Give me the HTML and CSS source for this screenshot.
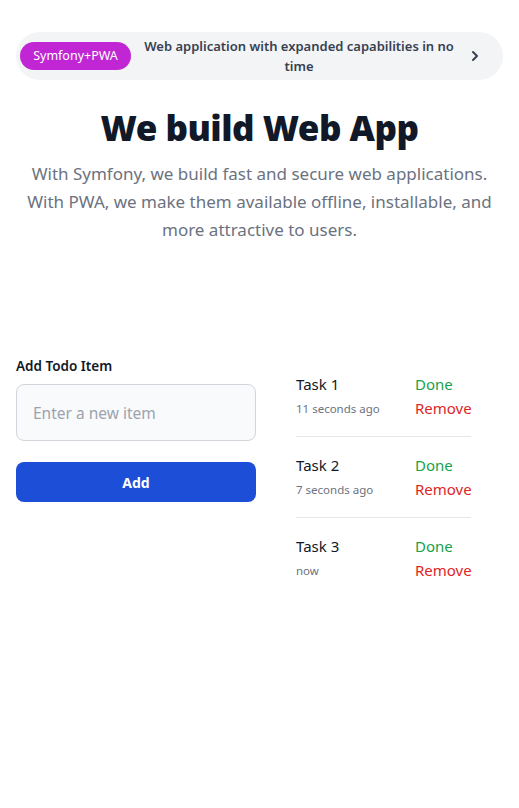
FILE: index.html
```html
<!DOCTYPE html>
<html lang="en">
<head>
<meta charset="utf-8">
<title>We build Web App</title>
<link rel="stylesheet" href="styles.css">
</head>
<body>
<div class="page">
  <header class="hero">
    <a class="banner" href="#">
      <span class="badge">Symfony+PWA</span>
      <span class="banner-text">Web application with expanded capabilities in no time</span>
      <svg class="chev" width="16" height="16" viewBox="0 0 16 16" aria-hidden="true"><path d="M6 4l4 4-4 4" fill="none" stroke="#374151" stroke-width="2" stroke-linecap="round" stroke-linejoin="round"/></svg>
    </a>
    <h1 class="title">We build Web App</h1>
    <p class="lead">With Symfony, we build fast and secure web applications. With PWA, we make them available offline, installable, and more attractive to users.</p>
  </header>
  <main class="todo">
    <form class="todo-form">
      <label class="label" for="item">Add Todo Item</label>
      <input class="input" id="item" type="text" placeholder="Enter a new item">
      <button class="btn" type="button">Add</button>
    </form>
    <ul class="list">
      <li class="item">
        <div class="info"><div class="name">Task 1</div><div class="time">11 seconds ago</div></div>
        <div class="actions"><a class="done" href="#">Done</a><a class="remove" href="#">Remove</a></div>
      </li>
      <li class="item">
        <div class="info"><div class="name">Task 2</div><div class="time">7 seconds ago</div></div>
        <div class="actions"><a class="done" href="#">Done</a><a class="remove" href="#">Remove</a></div>
      </li>
      <li class="item">
        <div class="info"><div class="name">Task 3</div><div class="time">now</div></div>
        <div class="actions"><a class="done" href="#">Done</a><a class="remove" href="#">Remove</a></div>
      </li>
    </ul>
  </main>
</div>
</body>
</html>
```
FILE: styles.css
```css
* { box-sizing: border-box; }
html, body { margin: 0; padding: 0; background: #fff; }
body { font-family: "Noto Sans", "Open Sans", sans-serif; color: #111827; }
.page { padding: 32px 16px 0; }
.hero { text-align: center; }
.banner {
  display: flex; align-items: center;
  height: 48px; border-radius: 24px; background: #f3f4f6;
  padding: 0 20px 0 4px; text-decoration: none;
}
.badge {
  flex: none; width: 111px; height: 28px; border-radius: 14px;
  background: #c026d3; color: #fff; font-size: 12.5px; line-height: 28px; text-align: center;
}
.banner-text {
  flex: 1; padding: 0 4px; color: #374151; font-size: 13px; font-weight: 600; line-height: 20px;
}
.chev { flex: none; }
.title {
  margin: 28px 0 0; font-size: 35px; line-height: 40px; font-weight: 900; color: #111827; letter-spacing: -0.5px;
}
.lead {
  margin: 12px 0 0; font-size: 17px; line-height: 28px; color: #6b7280; padding: 0 10px;
}
.todo { display: flex; gap: 40px; margin-top: 112px; }
.todo-form { width: 240px; display: flex; flex-direction: column; }
.label { font-size: 13.5px; line-height: 20px; font-weight: 600; color: #111827; margin-bottom: 8px; }
.input {
  height: 57px; border: 1px solid #d1d5db; border-radius: 8px; background: #f9fafb;
  padding: 0 16px; font: inherit; font-size: 15.5px; color: #111827; outline: none;
}
.input::placeholder { color: #9ca3af; }
.btn {
  margin-top: 21px; height: 40px; border: 0; border-radius: 8px; background: #1d4ed8; color: #fff;
  font: inherit; font-size: 14px; font-weight: 700;
}
.list { list-style: none; margin: 0; padding: 0; width: 175px; }
.item { display: flex; justify-content: space-between; padding: 16px 0; border-bottom: 1px solid #e5e7eb; }
.item:last-child { border-bottom: 0; }
.name { font-size: 15px; line-height: 24px; color: #111827; }
.time { font-size: 11.5px; line-height: 16px; margin-top: 5px; color: #6b7280; }
.actions { display: flex; flex-direction: column; width: 56px; }
.actions a { font-size: 15px; line-height: 24px; text-decoration: none; }
.done { color: #16a34a; }
.remove { color: #dc2626; }
```
